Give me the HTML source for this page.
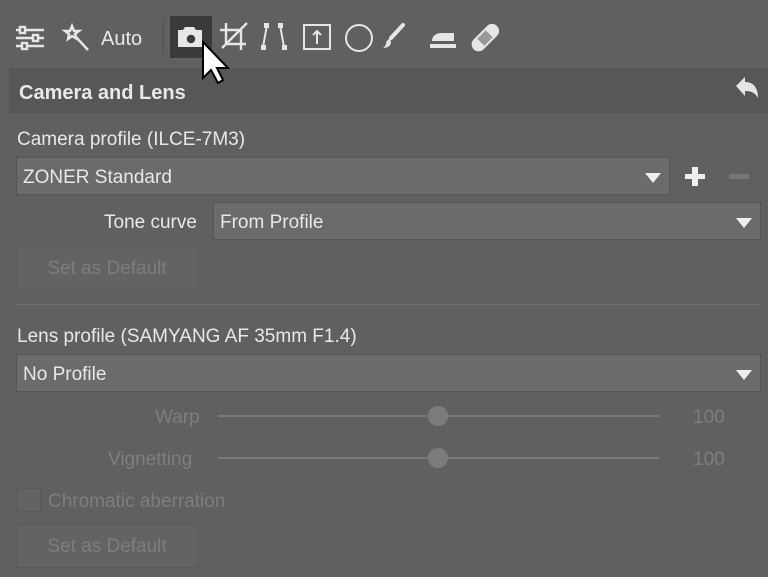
<!DOCTYPE html>
<html><head><meta charset="utf-8"><style>
*{margin:0;padding:0;box-sizing:border-box}
body{width:768px;height:577px;background:#606060;font-family:"Liberation Sans",sans-serif;color:#e8e8e8;position:relative;overflow:hidden}
.a{position:absolute}
.t{font-size:19px;white-space:nowrap}
.dd{position:absolute;background:#6b6b6b;border:1px solid #555;height:38px}
.dd span{position:absolute;left:6px;top:9px;font-size:19px}
.arr{position:absolute;right:8px;top:15px;width:0;height:0;border-left:8px solid transparent;border-right:8px solid transparent;border-top:10px solid #eee}
.btn{position:absolute;background:#636363;border:1px solid #5a5a5a;color:#7d7d7d;font-size:19px;text-align:center;line-height:44px}
.dim{color:#7e7e7e}
.track{position:absolute;height:2px;background:#787878}
.knob{position:absolute;width:20px;height:20px;border-radius:50%;background:#7c7c7c}
</style></head><body>
<svg class="a" style="left:0;top:0" width="520" height="70" viewBox="0 0 520 70" fill="none" stroke="#e6e6e6" stroke-width="2.4">
<g><line x1="16" y1="30" x2="44" y2="30"/><line x1="16" y1="38" x2="44" y2="38"/><line x1="16" y1="46" x2="44" y2="46"/><rect x="20" y="27" width="5" height="6" fill="#606060"/><rect x="33" y="35" width="5" height="6" fill="#606060"/><rect x="22" y="43" width="5" height="6" fill="#606060"/></g>
<g><path d="M72 26l2 5 5 0-4 3 2 5-5-3-4 3 1-5-4-3 5 0z"/><line x1="76" y1="37" x2="88" y2="50"/></g>
<line x1="163" y1="20" x2="163" y2="55" stroke="#555" stroke-width="1.5"/>
<rect x="170" y="16" width="42" height="42" fill="#3a3a3a" stroke="none"/>
<path d="M178 30h5l2-3h9l2 3h6v17h-24z" fill="#e6e6e6" stroke="none"/>
<circle cx="191" cy="39" r="5.5" fill="#3a3a3a" stroke="#e6e6e6" stroke-width="2.5"/>
<path d="M226 23v21h20M220 30h21v20M222 48l25-25"/>
<path d="M267 25l-4 22M280 25l4 22" stroke-width="2"/><rect x="264" y="23" width="5" height="5" fill="#e6e6e6" stroke="none"/><rect x="278" y="23" width="5" height="5" fill="#e6e6e6" stroke="none"/><rect x="261" y="45" width="5" height="5" fill="#e6e6e6" stroke="none"/><rect x="282" y="45" width="5" height="5" fill="#e6e6e6" stroke="none"/>
<rect x="304" y="25" width="26" height="24" stroke-width="2"/><path d="M317 44v-12M313 35l4-4 4 4" stroke-width="2"/>
<circle cx="359" cy="38" r="13" stroke-width="2"/>
<path d="M403 25l-12 13" stroke-width="4" stroke-linecap="round"/><path d="M390 39c-3 0-4 4-4 5-1 3-3 4-3 4 4 0 8-2 8-6z" fill="#e6e6e6" stroke="none"/>
<path d="M430 44h26v4h-26zM432 41c0-5 4-8 10-8h12v8z" fill="#e6e6e6" stroke="none"/>
<g transform="rotate(-45 485 38)"><rect x="469" y="31" width="33" height="14" rx="7" fill="#e6e6e6" stroke="none"/><rect x="479" y="33" width="12" height="10" fill="#999" stroke="none"/></g>
</svg>
<div class="a t" style="left:101px;top:28px;font-size:20px">Auto</div>
<div class="a" style="left:9px;top:68px;width:759px;height:45px;background:#575757"></div>
<div class="a t" style="left:19px;top:82px;font-weight:bold;font-size:20px">Camera and Lens</div>
<svg class="a" style="left:733px;top:75px" width="28" height="28" viewBox="0 0 28 28"><path d="M3 11l9-9v5c8 0 13 5 13 16-3-5-6-7-13-7v5z" fill="#e6e6e6"/></svg>
<div class="a t" style="left:17px;top:129px">Camera profile (ILCE-7M3)</div>
<div class="dd" style="left:16px;top:157px;width:654px"><span>ZONER Standard</span><div class="arr"></div></div>
<div class="a" style="left:685px;top:174px;width:20px;height:5px;background:#eee"></div>
<div class="a" style="left:692px;top:167px;width:6px;height:19px;background:#eee"></div>
<div class="a" style="left:729px;top:174px;width:20px;height:5px;background:#767676"></div>
<div class="a t" style="left:104px;top:212px">Tone curve</div>
<div class="dd" style="left:213px;top:202px;width:548px"><span>From Profile</span><div class="arr"></div></div>
<div class="btn" style="left:16px;top:246px;width:182px;height:44px">Set as Default</div>
<div class="a" style="left:16px;top:304px;width:745px;height:1px;background:#6e6e6e"></div>
<div class="a t" style="left:17px;top:326px">Lens profile (SAMYANG AF 35mm F1.4)</div>
<div class="dd" style="left:16px;top:354px;width:745px"><span>No Profile</span><div class="arr"></div></div>
<div class="a t dim" style="left:155px;top:407px">Warp</div>
<div class="track" style="left:218px;top:415px;width:441px"></div><div class="knob" style="left:428px;top:406px"></div>
<div class="a t dim" style="left:693px;top:407px">100</div>
<div class="a t dim" style="left:108px;top:449px">Vignetting</div>
<div class="track" style="left:218px;top:457px;width:441px"></div><div class="knob" style="left:428px;top:448px"></div>
<div class="a t dim" style="left:693px;top:449px">100</div>
<div class="a" style="left:17px;top:488px;width:24px;height:24px;background:#636363;border:1px solid #5a5a5a"></div>
<div class="a t dim" style="left:48px;top:491px">Chromatic aberration</div>
<div class="btn" style="left:16px;top:524px;width:182px;height:44px">Set as Default</div>
<svg class="a" style="left:200px;top:40px" width="36" height="50" viewBox="0 0 36 50"><path d="M3 2v36l8-8 7 13 5-3-6-12h11z" fill="#fff" stroke="#000" stroke-width="2"/></svg>
</body></html>
